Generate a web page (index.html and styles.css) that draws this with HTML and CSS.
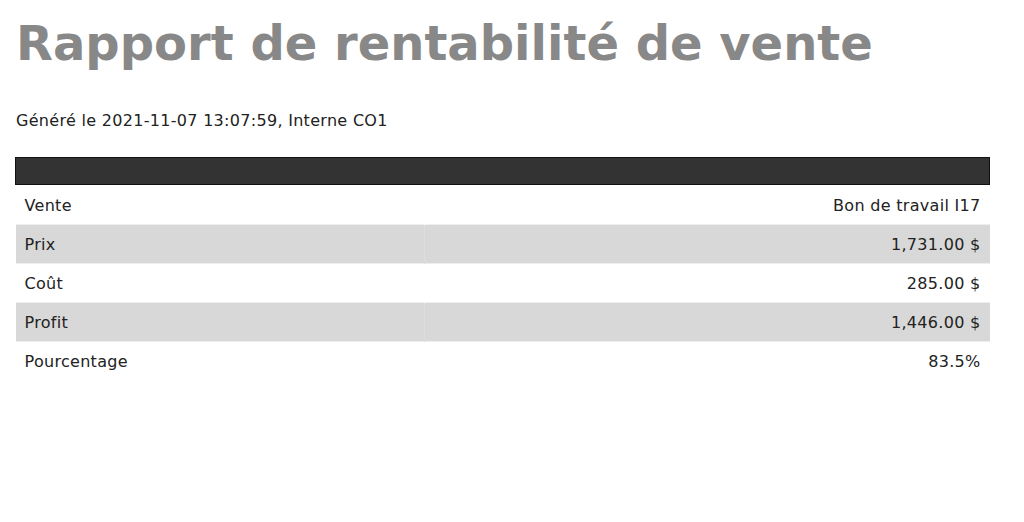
FILE: index.html
```html
<!DOCTYPE html>
<html lang="fr">
<head>
<meta charset="utf-8">
<title>Rapport de rentabilité de vente</title>
<link rel="stylesheet" href="styles.css">
</head>
<body>
<h1 class="title">Rapport de rentabilité de vente</h1>
<p class="meta">Généré le 2021-11-07 13:07:59, Interne CO1</p>
<table class="report">
  <thead>
    <tr><th class="head" colspan="2"></th></tr>
  </thead>
  <tbody>
    <tr class="first"><td class="label">Vente</td><td class="value">Bon de travail I17</td></tr>
    <tr class="alt"><td class="label">Prix</td><td class="value">1,731.00 $</td></tr>
    <tr><td class="label">Coût</td><td class="value">285.00 $</td></tr>
    <tr class="alt"><td class="label">Profit</td><td class="value">1,446.00 $</td></tr>
    <tr><td class="label">Pourcentage</td><td class="value">83.5%</td></tr>
  </tbody>
</table>
</body>
</html>
```
FILE: styles.css
```css
html, body {
  background: #fff;
}
body {
  margin: 0;
  padding: 0 15px;
  font-family: "DejaVu Sans", Verdana, sans-serif;
  color: #222;
  font-size: 16px;
  letter-spacing: 0.3px;
}
.title {
  margin: 15px 0 0 1px;
  font-size: 48px;
  font-weight: bold;
  color: #888;
  line-height: 56px;
  letter-spacing: 0;
}
.meta {
  margin: 40px 0 0 1px;
  font-size: 16px;
  line-height: 20px;
}
.report {
  margin-top: 26px;
  width: 975px;
  border-collapse: collapse;
}
.head {
  height: 26px;
  padding: 0;
  background: #333;
  border: 1px solid #111;
}
.report td {
  height: 38px;
  padding: 0 9px;
  border-top: 1px solid #eee;
  line-height: 19px;
}
.report .first td {
  height: 38px;
  padding-top: 1px;
  border-top: 0;
}
.label {
  width: 390px;
  text-align: left;
  border-right: 1px solid #fff;
}
.value {
  text-align: right;
}
.alt td {
  background: #d8d8d8;
}
.alt .label {
  border-right: 1px solid #dddddd;
}
```
